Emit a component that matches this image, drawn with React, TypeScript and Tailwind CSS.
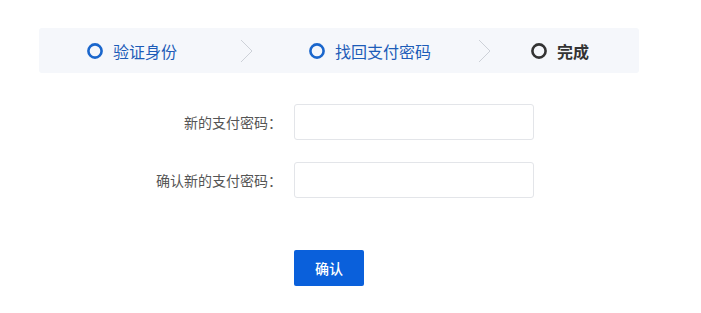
import React from "react";

const font = { fontFamily: '"Noto Sans CJK SC", "Noto Sans", sans-serif' };

function Chevron() {
  return (
    <svg width="13" height="24" viewBox="0 0 13 24" className="shrink-0">
      <polyline points="1,1 12,12 1,23" fill="none" stroke="#cdd1d8" strokeWidth="1" />
    </svg>
  );
}

function Circle({ dark }: { dark?: boolean }) {
  return (
    <svg width="16" height="16" viewBox="0 0 16 16" className="shrink-0">
      <circle cx="8" cy="8" r="6.6" fill="none" stroke={dark ? "#333333" : "#1a66cc"} strokeWidth="2.6" />
    </svg>
  );
}

export default function App() {
  return (
    <div className="w-[701px] h-[313px] bg-white" style={font}>
      <div className="pt-[28px] pl-[39px]">
        <div className="w-[600px] h-[45px] bg-[#f5f7fb] rounded-[3px] flex items-center">
          <div className="ml-[48px] flex items-center">
            <Circle />
            <span className="ml-[10px] text-[16px] leading-none text-[#1d5cb8]">验证身份</span>
          </div>
          <div className="ml-[63px] flex items-center">
            <Chevron />
          </div>
          <div className="ml-[56px] flex items-center">
            <Circle />
            <span className="ml-[10px] text-[16px] leading-none text-[#1d5cb8]">找回支付密码</span>
          </div>
          <div className="ml-[47px] flex items-center">
            <Chevron />
          </div>
          <div className="ml-[40px] flex items-center">
            <Circle dark />
            <span className="ml-[10px] text-[16px] leading-none font-bold text-[#333333]">完成</span>
          </div>
        </div>
      </div>

      <div className="mt-[31px] flex items-center">
        <div className="w-[282px] text-right text-[14px] text-[#555555] leading-none">新的支付密码：</div>
        <div className="ml-[12px] w-[240px] h-[36px] border border-[#e3e5e9] rounded-[3px] bg-white" />
      </div>
      <div className="mt-[22px] flex items-center">
        <div className="w-[282px] text-right text-[14px] text-[#555555] leading-none">确认新的支付密码：</div>
        <div className="ml-[12px] w-[240px] h-[36px] border border-[#e3e5e9] rounded-[3px] bg-white" />
      </div>

      <div className="mt-[52px] ml-[294px]">
        <button className="w-[70px] h-[36px] rounded-[2px] bg-[#0a60db] text-white text-[14px] font-medium flex items-center justify-center">
          确认
        </button>
      </div>
    </div>
  );
}
